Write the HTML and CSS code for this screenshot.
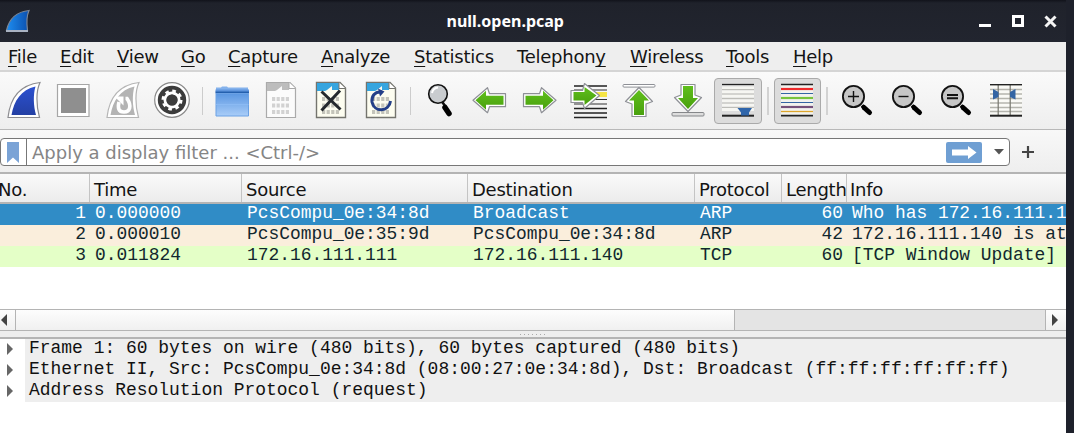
FILE: index.html
```html
<!DOCTYPE html>
<html lang="en">
<head>
<meta charset="utf-8">
<title>null.open.pcap</title>
<link rel="stylesheet" href="styles.css">
</head>
<body>
<svg class="defs" width="0" height="0" aria-hidden="true">
  <defs>
    <linearGradient id="blue" x1="0" y1="0" x2="0" y2="1"><stop offset="0" stop-color="#2b50d0"/><stop offset="1" stop-color="#2440a4"/></linearGradient>
    <linearGradient id="bright" x1="0" y1="0" x2="1" y2="0"><stop offset="0" stop-color="#1e8df0"/><stop offset="1" stop-color="#0b4fae"/></linearGradient>
    <linearGradient id="folder" x1="0" y1="0" x2="0" y2="1"><stop offset="0" stop-color="#5b97e2"/><stop offset="1" stop-color="#a9cdf8"/></linearGradient>
    <linearGradient id="green" x1="0" y1="0" x2="0" y2="1"><stop offset="0" stop-color="#5fbf1c"/><stop offset="1" stop-color="#49a00e"/></linearGradient>
    <g id="bits" fill="none" stroke-width="4" stroke-dasharray="3.200 1.400"><path d="M15 22h18M15 28.500h18M15 35h18"/></g>
    <g id="lens">
      <path d="M29 28.500l3 3" stroke="#000" stroke-width="3.500"/>
      <path d="M31 30.500l5.500 5" stroke="#000" stroke-width="5" stroke-linecap="round"/>
      <circle cx="20.500" cy="19.500" r="10.600" fill="#c6c6c6" stroke="#111" stroke-width="1.800"/>
    </g>
    <path id="arrow" d="M7.500 24L22 11.500L24 17.500H40V30.500H24L22 36.500Z" fill="#fff" stroke="#8e9096" stroke-width="1.200" stroke-linejoin="round"/>
    <path id="arrow-core" d="M10 24L20.500 14.500V19.500H38V28.500H20.500V33.500Z" fill="url(#green)"/>
  </defs>
</svg>
<div class="window">
  <header class="titlebar">
    <svg class="logo" viewBox="0 0 26 26"><path d="M1.500 22.500C4 11 12 3.500 24 2.500C21.500 8 21.500 15 22.500 22.500Z" fill="url(#bright)" stroke="#7c8798" stroke-width="1.200"/><path d="M1 23H23" stroke="#a9b2c2" stroke-width="2"/></svg>
    <h1 class="title">null.open.pcap</h1>
    <svg class="controls" viewBox="0 0 80 16"><path d="M0 12.500h12" stroke="#fff" stroke-width="3"/><path d="M34.500 3.500h9v9h-9z" fill="none" stroke="#fff" stroke-width="3"/><path d="M66.500 3.500l10 10M76.500 3.500l-10 10" stroke="#f4f4f4" stroke-width="3"/></svg>
  </header>

  <nav class="menu">
    <span><u>F</u>ile</span><span><u>E</u>dit</span><span><u>V</u>iew</span><span><u>G</u>o</span><span><u>C</u>apture</span><span><u>A</u>nalyze</span><span><u>S</u>tatistics</span><span>Telephon<u>y</u></span><span><u>W</u>ireless</span><span><u>T</u>ools</span><span><u>H</u>elp</span>
  </nav>

  <div class="toolbar">
    <div class="tool"><svg viewBox="0 0 48 48"><path d="M8 40.500C10 22 19 8 40 5.500C36 14 36 28 39.500 40.500Z" fill="#fff" stroke="#8c8c90" stroke-width="1.200"/><path d="M11.500 38C14 24 21 12.500 35.500 9.500C33 18 33.500 29 36 38Z" fill="url(#blue)"/></svg></div>
    <div class="tool"><svg viewBox="0 0 48 48"><path d="M8.500 7.500h31.500v32h-31.500z" fill="#fff" stroke="#a6a6a6" stroke-width="1.200"/><path d="M12 11h25v25H12z" fill="#8f8f8f"/></svg></div>
    <div class="tool"><svg viewBox="0 0 48 48"><path d="M8 40.500C10 22 19 8 40 5.500C36 14 36 28 39.500 40.500Z" fill="#fff" stroke="#b5b5b5" stroke-width="1.200"/><path d="M11.500 38C14 24 21 12.500 35.500 9.500C33 18 33.500 29 36 38Z" fill="#b4b4b4"/><path d="M26.500 21.500H28C33 29 31 35 25 35C19.500 35 18.500 31 20 25" fill="none" stroke="#fff" stroke-width="3.600"/><path d="M15.500 19.500h9v9z" fill="#fff"/></svg></div>
    <div class="tool"><svg viewBox="0 0 48 48"><circle cx="24" cy="23" r="17.300" fill="#fff" stroke="#8a8a8a" stroke-width="1.200"/><circle cx="24" cy="23" r="14.200" fill="#3c3c3c"/><circle cx="24" cy="23" r="7" fill="none" stroke="#fff" stroke-width="3"/><circle cx="24" cy="23" r="9.200" fill="none" stroke="#fff" stroke-width="2.600" stroke-dasharray="3.613 3.613"/><circle cx="24" cy="23" r="5.600" fill="#3c3c3c"/></svg></div>
    <i class="sep"></i>
    <div class="tool"><svg viewBox="0 0 48 48"><path d="M8 13V10.500H13L14 9.500H19L20 10.500H40V14Z" fill="#84b2ec"/><path d="M7.500 12.500h33.500v3H7.500z" fill="#6096de"/><path d="M7.500 14.500h33.500v2H7.500z" fill="#2460ae"/><path d="M8 16.500h32.500v22.500H8z" fill="url(#folder)" stroke="#6ba1e4"/><path d="M8 27.500h32.500" stroke="#8bbaf3"/></svg></div>
    <div class="tool"><svg viewBox="0 0 48 48"><path d="M9.500 5.500H33L38.500 11V40.500H9.500Z" fill="#fbfbfb" stroke="#aaa" stroke-width="1.200"/><path d="M10 6H32V13H25V9L20 13L18 14H10Z" fill="#bdbdbd"/><path d="M32 5.500V11.500H38.500" fill="#fff" stroke="#aaa"/><use href="#bits" stroke="#d2d2d2"/></svg></div>
    <div class="tool"><svg viewBox="0 0 48 48"><path d="M9.500 5.500H33L38.500 11V40.500H9.500Z" fill="#fdfdf0" stroke="#74746e" stroke-width="1.400"/><path d="M10 6H32V13H25V9L20 13L18 14H10Z" fill="#36a5df"/><path d="M32 5.500V11.500H38.500" fill="#fff" stroke="#74746e"/><use href="#bits" stroke="#c4c4ba"/><path d="M14.500 14.500L33.500 32.500M33 13.500L14.500 33.500" stroke="#25292e" stroke-width="3"/></svg></div>
    <div class="tool"><svg viewBox="0 0 48 48"><path d="M9.500 5.500H33L38.500 11V40.500H9.500Z" fill="#fdfdf0" stroke="#74746e" stroke-width="1.400"/><path d="M10 6H32V13H25V9L20 13L18 14H10Z" fill="#36a5df"/><path d="M32 5.500V11.500H38.500" fill="#fff" stroke="#74746e"/><use href="#bits" stroke="#c4c4ba"/><path d="M25 15C17 14 14.500 20 15 25C17 35.500 32 35.500 33.500 24" fill="none" stroke="#243f88" stroke-width="3"/><path d="M21 11.500L27.500 14.500L23 19.500Z" fill="#243f88"/></svg></div>
    <i class="sep"></i>
    <div class="tool"><svg viewBox="0 0 48 48"><path d="M26 24.500L30 30.500" stroke="#111" stroke-width="2.500"/><path d="M29 30.500L33 36.500" stroke="#000" stroke-width="5.500" stroke-linecap="round"/><circle cx="22" cy="17" r="9.300" fill="#c9cccf" stroke="#111" stroke-width="1.600"/><path d="M16 16Q17 11 22 10.500" fill="none" stroke="#fff" stroke-width="2"/></svg></div>
    <div class="tool"><svg viewBox="0 0 48 48"><g transform="translate(-.500 -.800)"><use href="#arrow"/><use href="#arrow-core"/></g></svg></div>
    <div class="tool"><svg viewBox="0 0 48 48"><g transform="translate(48.500 -.800) scale(-1 1)"><use href="#arrow"/><use href="#arrow-core"/></g></svg></div>
    <div class="tool"><svg viewBox="0 0 48 48"><path d="M9 9h33M9 31.500h33M9 36h33M9 40.500h33" stroke="#222" stroke-width="1.700"/><path d="M9 27h33M9 22.500h33M9 13h33" stroke="#333" stroke-width="1.200"/><path d="M28 15h14v5H28z" fill="#f6e545"/><path d="M6 13.500H17.500L19.500 6.500L34.500 18.500L19.500 31.500L17.500 25.500H6Z" fill="#fff" stroke="#8e9096" stroke-width="1.200" stroke-linejoin="round"/><path d="M8.500 15H19.500V10L31.500 18.500L19.500 28V23.500H8.500Z" fill="url(#green)"/></svg></div>
    <div class="tool"><svg viewBox="0 0 48 48"><rect x="8" y="7.500" width="32" height="2.600" rx="1" fill="#fff" stroke="#8e9096"/><path d="M24 10.500L37.500 24.500L31 27V39.500H17V27L10.500 24.500Z" fill="#fff" stroke="#8e9096" stroke-width="1.200" stroke-linejoin="round"/><path d="M24 13L34 23.500H29V38H19V23.500H14Z" fill="url(#green)"/></svg></div>
    <div class="tool"><svg viewBox="0 0 48 48"><rect x="8" y="35.500" width="32" height="3.500" rx="1" fill="#ddd" stroke="#85878a"/><path d="M24 34.500L37.500 20.500L31 18V7.500H17V18L10.500 20.500Z" fill="#fff" stroke="#8e9096" stroke-width="1.200" stroke-linejoin="round"/><path d="M24 32L34 21H29V9H19V21H14Z" fill="url(#green)"/></svg></div>
    <div class="tool on"><svg viewBox="0 0 48 48"><path d="M8 11h32M8 15h32M8 19h32M8 24h32M8 28h32M8 32.500h32" stroke="#f6f6f2" stroke-width="3"/><path d="M8 12.500h32M8 17h32M8 21.500h32M8 26h32M8 30.500h32" stroke="#bdbdb8"/><path d="M8 7.500h32" stroke="#222" stroke-width="1.300"/><path d="M8 38.700h32" stroke="#222" stroke-width="2"/><path d="M23.500 31H38L35 35.500V38.500H27V35.500Z" fill="#2f65aa"/></svg></div>
    <i class="sep line"></i>
    <div class="tool on"><svg viewBox="0 0 48 48"><path d="M8 7h32v32H8z" fill="#f2f2ee"/><path d="M8 7.500h32M8 38.700h32" stroke="#222" stroke-width="1.700"/><path d="M8 12h32" stroke="#ed2a2b" stroke-width="2.200"/><path d="M8 16.500h32M8 25.500h32" stroke="#3465a4" stroke-width="1.200"/><path d="M8 21h32" stroke="#78c43c" stroke-width="2.200"/><path d="M8 30h32" stroke="#75507b" stroke-width="2.200"/><path d="M8 34.500h32" stroke="#dda52c" stroke-width="1.300"/></svg></div>
    <i class="sep line"></i>
    <div class="tool"><svg viewBox="0 0 48 48"><use href="#lens" /><path d="M15 19.500h11M20.500 14v11" stroke="#111" stroke-width="1.400"/></svg></div>
    <div class="tool"><svg viewBox="0 0 48 48"><use href="#lens"/><path d="M15.500 19.500h10" stroke="#111" stroke-width="1.400"/></svg></div>
    <div class="tool"><svg viewBox="0 0 48 48"><use href="#lens"/><path d="M15 18h11M15 21.300h11" stroke="#111" stroke-width="1.900"/></svg></div>
    <div class="tool"><svg viewBox="0 0 48 48"><path d="M8 8h32v31H8z" fill="#fafaf6"/><path d="M8 12.500h32M8 17h32M8 21.500h32M8 26h32M8 30.500h32M8 34.500h32" stroke="#b5b5ae" stroke-width="1.300"/><path d="M16.200 8v30M28.200 8v30" stroke="#77776e" stroke-width="1.200"/><path d="M8 7.700h32" stroke="#222" stroke-width="1.400"/><path d="M8 38.700h32" stroke="#222" stroke-width="2"/><path d="M11 12L16.500 15V20L11 22.500ZM33.500 12L28 15V20L33.500 22.500Z" fill="#3465a4"/></svg></div>
  </div>

  <div class="filterbar">
    <div class="filter">
      <span class="bookmark"><svg viewBox="0 0 12 21"><path d="M0 0H12V21L6 15.500L0 21Z" fill="#7aa3d6"/></svg></span>
      <span class="placeholder">Apply a display filter ... &lt;Ctrl-/&gt;</span>
      <svg class="apply" viewBox="0 0 36 21"><rect width="36" height="21" rx="2" fill="#6f9fd3"/><path d="M6 7.500H22V4L30.500 10.500L22 17V13.500H6Z" fill="#fff"/></svg>
      <svg class="drop" viewBox="0 0 10 6"><path d="M0 0H10L5 5.500Z" fill="#555"/></svg>
    </div>
    <svg class="plus" viewBox="0 0 12 12"><path d="M0 6h12M6 0v12" stroke="#444" stroke-width="2.200"/></svg>
  </div>

  <div class="list">
    <div class="row head"><span>No.</span><span>Time</span><span>Source</span><span>Destination</span><span>Protocol</span><span>Length</span><span>Info</span></div>
    <div class="row selected"><span>1</span><span>0.000000</span><span>PcsCompu_0e:34:8d</span><span>Broadcast</span><span>ARP</span><span>60</span><span>Who has 172.16.111.1</span></div>
    <div class="row arp"><span>2</span><span>0.000010</span><span>PcsCompu_0e:35:9d</span><span>PcsCompu_0e:34:8d</span><span>ARP</span><span>42</span><span>172.16.111.140 is at</span></div>
    <div class="row tcp"><span>3</span><span>0.011824</span><span>172.16.111.111</span><span>172.16.111.140</span><span>TCP</span><span>60</span><span>[TCP Window Update]</span></div>
  </div>

  <div class="scrollbar">
    <span class="step left"><svg viewBox="0 0 6 12"><path d="M6 0V12L0 6Z" fill="#444"/></svg></span>
    <span class="thumb"></span>
    <span class="step right"><svg viewBox="0 0 6 12"><path d="M0 0V12L6 6Z" fill="#444"/></svg></span>
  </div>
  <div class="splitter"><i></i></div>

  <div class="details">
    <div class="node"><svg viewBox="0 0 6 12"><path d="M0 0V12L6 6Z" fill="#666"/></svg><span>Frame 1: 60 bytes on wire (480 bits), 60 bytes captured (480 bits)</span></div>
    <div class="node"><svg viewBox="0 0 6 12"><path d="M0 0V12L6 6Z" fill="#666"/></svg><span>Ethernet II, Src: PcsCompu_0e:34:8d (08:00:27:0e:34:8d), Dst: Broadcast (ff:ff:ff:ff:ff:ff)</span></div>
    <div class="node"><svg viewBox="0 0 6 12"><path d="M0 0V12L6 6Z" fill="#666"/></svg><span>Address Resolution Protocol (request)</span></div>
  </div>
</div>
</body>
</html>
```

FILE: styles.css
```css
* { box-sizing: border-box; }
body { margin: 0; background: #1e212b; overflow: hidden; }
svg { display: block; flex: none; }
.defs { position: absolute; }

.window {
  width: 1066px;
  height: 433px;
  display: flex;
  flex-direction: column;
  background: #fff;
  color: #141414;
  font: 18px/21px "DejaVu Sans", sans-serif;
  overflow: hidden;
  white-space: nowrap;
}
.window > * { flex: none; }

.titlebar {
  height: 42px;
  display: grid;
  grid-template-columns: 446.500px 1fr 87px;
  align-items: center;
  background: linear-gradient(#11131b, #1f222b 3px, #22252f);
}
.logo { width: 26px; height: 26px; margin-left: 5px; }
.title { margin: 0; color: #fff; font: bold 16px/20px "Noto Sans", sans-serif; }
.controls { width: 80px; height: 16px; }

.menu {
  height: 30px;
  display: grid;
  grid-template-columns: 52px 57px 64px 47px 93px 93px 103px 113px 96px 67px 60px;
  padding-left: 8px;
  line-height: 29px;
  background: #eee;
  border-bottom: 2px solid #d5d5d5;
}
.menu u { text-decoration-thickness: 1px; text-underline-offset: 3px; text-decoration-skip-ink: none; }
.menu, .head { letter-spacing: -.250px; }

.toolbar {
  height: 58px;
  display: flex;
  align-items: center;
  margin-left: -1.300px;
  background: linear-gradient(#fafafa, #eee);
  border-bottom: 1px solid #b8b8b8;
}
.tool { width: 49.600px; height: 46px; flex: none; display: flex; align-items: center; justify-content: center; }
.tool svg { width: 48px; height: 48px; }
.tool.on { background: #dcdcdc; border: 1px solid #aaa; border-radius: 4px; width: 47.600px; margin: 0 1px; }
.sep { width: 10px; height: 28px; flex: none; display: flex; justify-content: center; }
.sep::before { content: ""; width: 1px; background: #ccc; }
.sep.line::before { width: 2px; background: #d2d2d2; }

.filterbar {
  height: 44px;
  display: flex;
  align-items: center;
  gap: 12px;
  background: linear-gradient(#f8f8f8, #eee);
  border-bottom: 2px solid #b4b4b4;
}
.filter {
  width: 1010px;
  height: 28px;
  display: flex;
  align-items: center;
  background: #fff;
  border: 1px solid #777;
  border-radius: 4px;
  margin-top: 2px;
}
.bookmark { width: 26px; height: 26px; padding: 3px 0 0 6px; border-right: 1px solid #777; }
.bookmark svg { width: 12px; height: 21px; }
.placeholder { flex: 1; padding-left: 5px; color: #858585; }
.apply { width: 36px; height: 21px; margin-right: 12px; }
.drop { width: 10px; height: 6px; margin-right: 5px; }
.plus { width: 12px; height: 12px; margin-top: 1px; }

.list { height: 135px; font: 17.900px/21px "Liberation Mono", monospace; }
.row { display: grid; grid-template-columns: 90px 152px 226px 227px 87px 65px 219px; height: 21px; line-height: 19px; }
.row span { padding-left: 5px; overflow: hidden; }
.row span:first-child, .row span:nth-child(6) { text-align: right; padding: 0 4px 0 0; }
.row.head {
  height: 30px;
  line-height: 31px;
  font-family: "DejaVu Sans", sans-serif;
  font-size: 18px;
  background: linear-gradient(#fafafa, #ececec);
  border-bottom: 2px solid #b4b4b4;
}
.head span { height: 28px; border-right: 1px solid #c4c4c4; padding-left: 4px; }
.head span:first-child { text-align: left; padding: 0; text-indent: -2px; overflow: visible; }
.head span:nth-child(6) { text-align: left; padding: 0 0 0 4px; }
.head span:last-child { border: 0; padding-left: 3px; }
.selected { background: #308cc6; color: #fff; }
.arp { background: #faeedc; color: #12272e; }
.tcp { background: #e4ffc7; color: #12272e; }

.scrollbar {
  height: 22px;
  display: flex;
  background: #e4e4e4;
  border: solid #b4b4b4;
  border-width: 1px 0;
}
.step { display: flex; align-items: center; background: linear-gradient(#fdfdfd, #f0f0f0); }
.step svg { width: 6px; height: 12px; }
.step.left { width: 16px; padding-left: 1px; border-right: 1px solid #b4b4b4; }
.step.right { width: 21px; padding-left: 6px; margin-left: auto; border-left: 1px solid #b4b4b4; }
.thumb { width: 719px; background: linear-gradient(#fdfdfd, #f0f0f0); border-right: 1px solid #b4b4b4; }
.splitter { height: 8px; background: #eee; border-bottom: 2px solid #b4b4b4; display: flex; justify-content: center; align-items: center; }
.splitter i { width: 26px; height: 1px; background: repeating-linear-gradient(90deg, #aaa 0 1px, transparent 1px 4px); }

.details { font: 17.970px/21px "Liberation Mono", monospace; color: #111; }
.node { display: flex; height: 21px; align-items: flex-start; }
.node svg { width: 6px; height: 12px; margin: 4px 12px 0 7px; }
.node span { flex: 1; height: 21px; line-height: 18px; padding-left: 4px; background: #eee; }
```
